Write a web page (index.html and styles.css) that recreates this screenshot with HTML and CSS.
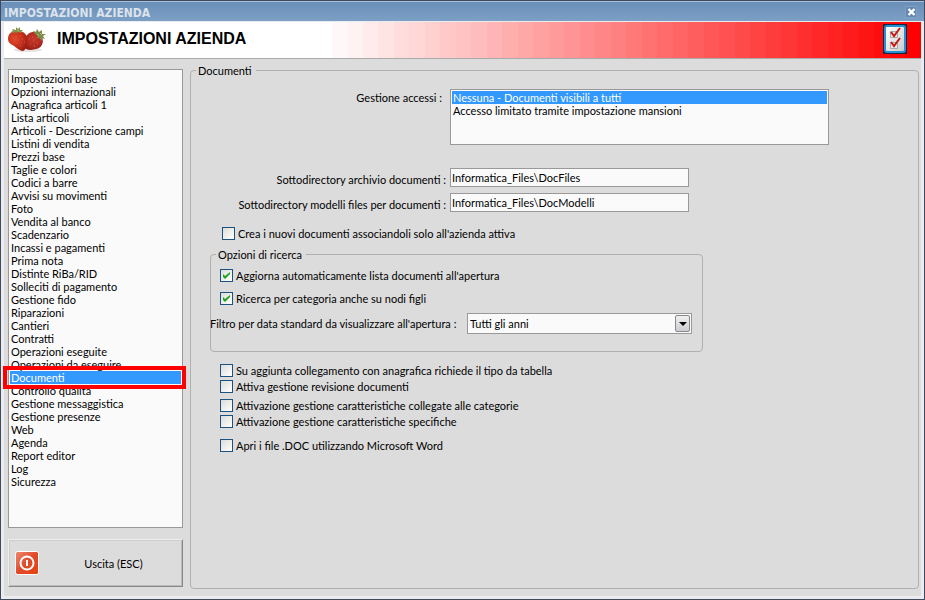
FILE: index.html
```html
<!DOCTYPE html>
<html lang="it">

<head>
<meta charset="UTF-8">
<meta name="viewport" content="width=device-width, initial-scale=1.0">
<title>Impostazioni azienda</title>
<link rel="stylesheet" href="styles.css">
</head>

<body>

<div class="window">

<div class="title-bar">
<span>IMPOSTAZIONI AZIENDA</span>
<button class="close" type="button" aria-label="Chiudi">
<svg width="9" height="8" viewBox="0 0 9 8"><path d="M1.5 1L7.500 7M7.500 1L1.500 7" stroke="#fff" stroke-width="2.400"/></svg>
</button>
</div>

<div class="client">

<header class="banner">
<div class="title">
<svg class="logo" width="40" height="28" viewBox="0 0 40 28">
<defs>
<radialGradient id="berry1" cx="0.35" cy="0.4" r="0.7"><stop stop-color="#e04a2c"/><stop offset="0.6" stop-color="#c42f1c"/><stop offset="1" stop-color="#9c1f14"/></radialGradient>
<radialGradient id="berry2" cx="0.5" cy="0.4" r="0.7"><stop stop-color="#c9382a"/><stop offset="0.6" stop-color="#b02a20"/><stop offset="1" stop-color="#861a14"/></radialGradient>
</defs>
<ellipse cx="20" cy="24" rx="14" ry="2" fill="#e9e2de"/>
<path d="M17 12C20 5 29 4 32 8C36 12 36 19 31 22C27 24 19 25 17 22Z" fill="url(#berry2)"/>
<path d="M0 13C0 7 5 4 10 5C16 5 20 9 19 15C19 20 18 24 15 25C12 25 9 22 6 20C3 18 0 17 0 13Z" fill="url(#berry1)"/>
<path d="M3 6L5 5L4 3L8 4L8 1L10 3L12 1L12 4L15 4L13 6L14 7L10 6L8 7L7 6L5 7Z" fill="#87914c"/>
<path d="M25 5L28 6L29 3L31 6L34 4L34 8L38 8L35 10L37 13L34 12L34 15L31 12L28 12L30 10L27 8Z" fill="#7d8b48"/>
<path d="M32 7l2 2M29 8l2 2M9 4l2 1" stroke="#b5b97c"/>
<path d="M4 11h1M8 10h1M12 10h1M6 14h1M10 14h1M14 13h1M9 17h1M13 17h1M16 16h1M12 20h1M21 13h1M24 11h1M25 15h1M22 18h1M29 17h1M26 20h1" stroke="#d8583a"/>
</svg>
<h1>IMPOSTAZIONI AZIENDA</h1>
</div>
<div class="bands" id="bands">
<svg class="checklist" width="24" height="30" viewBox="0 0 24 30">
<defs><linearGradient id="paper" x2="1" y2="1"><stop stop-color="#fff"/><stop offset="1" stop-color="#ccc"/></linearGradient></defs>
<rect width="24" height="30" rx="1" fill="#16283c"/>
<rect x="1" y="1" width="22" height="28" rx="3" fill="#2590d6"/>
<rect x="3" y="3" width="18" height="24" rx="1" fill="url(#paper)"/>
<path d="M7.500 7.500h7v6h-7zM7.500 18.500h7v6h-7z" fill="#e8e8e8" stroke="#aaa"/>
<path d="M8 8L11 12L17 4M8 18L11 22L17 14" fill="none" stroke="#c71912" stroke-width="2"/>
</svg>
</div>
</header>

<main class="content">

<div class="sidebar">
<nav>
<ul class="sections">
<li><a href="#">Impostazioni base</a></li>
<li><a href="#">Opzioni internazionali</a></li>
<li><a href="#">Anagrafica articoli 1</a></li>
<li><a href="#">Lista articoli</a></li>
<li><a href="#">Articoli - Descrizione campi</a></li>
<li><a href="#">Listini di vendita</a></li>
<li><a href="#">Prezzi base</a></li>
<li><a href="#">Taglie e colori</a></li>
<li><a href="#">Codici a barre</a></li>
<li><a href="#">Avvisi su movimenti</a></li>
<li><a href="#">Foto</a></li>
<li><a href="#">Vendita al banco</a></li>
<li><a href="#">Scadenzario</a></li>
<li><a href="#">Incassi e pagamenti</a></li>
<li><a href="#">Prima nota</a></li>
<li><a href="#">Distinte RiBa/RID</a></li>
<li><a href="#">Solleciti di pagamento</a></li>
<li><a href="#">Gestione fido</a></li>
<li><a href="#">Riparazioni</a></li>
<li><a href="#">Cantieri</a></li>
<li><a href="#">Contratti</a></li>
<li><a href="#">Operazioni eseguite</a></li>
<li><a href="#">Operazioni da eseguire</a></li>
<li class="current"><a href="#" aria-current="page">Documenti</a></li>
<li><a href="#">Controllo qualità</a></li>
<li><a href="#">Gestione messaggistica</a></li>
<li><a href="#">Gestione presenze</a></li>
<li><a href="#">Web</a></li>
<li><a href="#">Agenda</a></li>
<li><a href="#">Report editor</a></li>
<li><a href="#">Log</a></li>
<li><a href="#">Sicurezza</a></li>
</ul>
</nav>
<button class="exit" type="button">
<svg width="24" height="24" viewBox="0 0 24 24">
<defs><linearGradient id="power" x2="1" y2="1"><stop stop-color="#f08a72"/><stop offset="0.500" stop-color="#df4a2c"/><stop offset="1" stop-color="#e8430c"/></linearGradient></defs>
<rect x="0.500" y="0.500" width="23" height="23" rx="2" fill="url(#power)" stroke="#fff"/>
<circle cx="12" cy="12" r="6.500" fill="none" stroke="#fff" stroke-width="2"/>
<path d="M12 9v6" stroke="#fff" stroke-width="2"/>
</svg>
<span>Uscita (ESC)</span>
</button>
</div>

<fieldset class="panel">
<legend>Documenti</legend>

<div class="fields">
<label class="access-label" for="access">Gestione accessi :</label>
<select id="access" class="access" size="4">
<option class="chosen">Nessuna - Documenti visibili a tutti</option>
<option>Accesso limitato tramite impostazione mansioni</option>
</select>
<label for="archive">Sottodirectory archivio documenti :</label>
<input id="archive" type="text" value="Informatica_Files\DocFiles">
<label for="models">Sottodirectory modelli files per documenti :</label>
<input id="models" type="text" value="Informatica_Files\DocModelli">
</div>

<label class="check company"><input type="checkbox">Crea i nuovi documenti associandoli solo all'azienda attiva</label>

<fieldset class="search">
<legend>Opzioni di ricerca</legend>
<label class="check"><input type="checkbox" checked>Aggiorna automaticamente lista documenti all'apertura</label>
<label class="check"><input type="checkbox" checked>Ricerca per categoria anche su nodi figli</label>
<div class="filter">
<label for="years">Filtro per data standard da visualizzare all'apertura :</label>
<div class="combo">
<select id="years"><option>Tutti gli anni</option></select>
<span class="arrow"><svg width="8" height="4" viewBox="0 0 8 4"><path d="M0 0h8L4 4z"/></svg></span>
</div>
</div>
</fieldset>

<div class="checks">
<label class="check"><input type="checkbox">Su aggiunta collegamento con anagrafica richiede il tipo da tabella</label>
<label class="check"><input type="checkbox">Attiva gestione revisione documenti</label>
</div>
<div class="checks">
<label class="check"><input type="checkbox">Attivazione gestione caratteristiche collegate alle categorie</label>
<label class="check"><input type="checkbox">Attivazione gestione caratteristiche specifiche</label>
</div>
<div class="checks last">
<label class="check"><input type="checkbox">Apri i file .DOC utilizzando Microsoft Word</label>
</div>
</fieldset>

</main>
</div>
</div>

<script>
// white to red in even steps
const bands = document.getElementById('bands');
const steps = 39;
let stops = [];
for (let i = 0; i < steps; i++) {
const c = Math.round(255 - 255 * i / (steps - 1));
stops.push(`rgb(255, ${c}, ${c}) ${i / steps * 100}% ${(i + 1) / steps * 100}%`);
}
bands.style.backgroundImage = `linear-gradient(90deg, ${stops.join(', ')})`;
</script>

</body>

</html>
```
FILE: styles.css
```css
* {
box-sizing: border-box;
}

body {
margin: 0;
font-family: Lato, 'Liberation Sans', sans-serif;
font-size: 11px;
line-height: 13px;
color: #000;
}

button, input, select {
font: inherit;
color: inherit;
margin: 0;
}

.window {
display: flex;
flex-direction: column;
min-height: 100vh;
border: 1px solid #3f4a5c;
background: #ececf0;
}

.title-bar {
display: flex;
align-items: center;
justify-content: space-between;
height: 20px;
padding: 3px 7px 0 3px;
border-top: 1px solid #a9c0dc;
background: linear-gradient(#6a8fb8, #7c9fc5);
color: #dce3ec;
font-family: 'DejaVu Sans Condensed', 'DejaVu Sans', sans-serif;
font-stretch: condensed;
font-size: 12px;
font-weight: bold;
}

.close {
display: flex;
align-items: center;
justify-content: center;
width: 12px;
height: 12px;
margin-bottom: 2px;
padding: 0;
border: 1px solid #7fa0c4;
background: #6688ae;
}

.client {
display: flex;
flex-direction: column;
flex: 1;
margin: 1px 3px 3px;
background: #dcdcdc;
}

.banner {
display: flex;
height: 37px;
border-bottom: 1px solid #aaa;
background: #fff;
}

.title {
display: flex;
align-items: center;
width: 34%;
padding-left: 4px;
}

.banner h1 {
margin: 0 0 3px 9px;
font: bold 16px/20px 'Liberation Sans', Arial, sans-serif;
white-space: nowrap;
}

.bands {
display: flex;
align-items: center;
justify-content: flex-end;
flex: 1;
padding: 0 14px 3px 0;
}

.content {
display: flex;
flex: 1;
gap: 7px;
padding: 5px 2px 7px 4px;
}

.sidebar {
display: flex;
flex-direction: column;
gap: 11px;
width: 175px;
padding: 5px 0 2px;
}

.sidebar nav {
flex: 1;
border: 1px solid #999;
background: #fafafa;
}

.sections {
margin: 0;
padding: 2px 1px;
list-style: none;
}

.sections a {
display: block;
height: 13px;
padding: 0 1px;
color: #000;
text-decoration: none;
}

.sections .current {
position: relative;
}

.sections .current a {
background: #39f;
color: #fff;
}

/* red frame over the neighbouring rows */
.current::after {
content: '';
position: absolute;
inset: -5px -5px -5px -7px;
border: 4px solid #f00;
}

.exit {
display: flex;
align-items: center;
height: 48px;
padding: 0 6px;
border: 1px solid;
border-color: #eee #888 #888 #eee;
box-shadow: inset 1px 1px #cdcdd0, inset -1px -1px #bbb;
background: #dcdcdc;
}

.exit span {
flex: 1;
padding-left: 12px;
}

fieldset {
min-width: 0;
margin: 0;
border: 1px solid #b0b0b0;
border-radius: 4px;
}

legend {
padding: 0 4px 0 2px;
}

.panel {
flex: 1;
padding: 0 19px;
}

.panel > legend {
margin-left: -14px;
}

.fields {
display: grid;
grid-template-columns: 236px minmax(0, 379px);
column-gap: 4px;
row-gap: 6px;
padding-top: 12px;
}

.fields label {
align-self: center;
padding-top: 3px;
text-align: right;
}

.fields .access-label {
align-self: start;
padding: 2px 4px 0 0;
}

input[type="text"] {
width: 239px;
height: 19px;
padding: 0 1px;
border: 1px solid #999;
border-radius: 0;
background: #fafafa;
}

.access {
height: 56px;
margin-bottom: 17px;
padding: 1px;
border: 1px solid #999;
border-radius: 0;
background: #fafafa;
overflow: hidden;
}

.access option {
min-height: 13px;
padding: 0 1px;
}

.access .chosen {
background: #39f;
color: #fff;
}

.check {
display: flex;
align-items: center;
gap: 3px;
}

.check input {
appearance: none;
width: 13px;
height: 13px;
border: 1px solid #1c5180;
background: linear-gradient(135deg, #dcdcd7, #fff);
}

.check input:checked {
background: url("data:image/svg+xml,%3Csvg xmlns='http://www.w3.org/2000/svg' viewBox='0 0 11 11'%3E%3Cpath d='M2 4v3l2 2l5-5V2L4 6z' fill='%2321a121'/%3E%3C/svg%3E"), linear-gradient(135deg, #dcdcd7, #fff);
}

.company {
margin: 15px 0 8px 12px;
}

.search {
max-width: 493px;
margin-bottom: 12px;
padding: 8px 9px 17px;
}

.search legend {
margin-left: -4px;
}

.search .check {
margin-bottom: 10px;
}

.filter {
display: flex;
align-items: center;
justify-content: space-between;
margin: -2px 1px 0 -10px;
}

.filter label {
white-space: nowrap;
}

.combo {
position: relative;
width: 225px;
}

.combo select {
display: block;
appearance: none;
width: 100%;
height: 21px;
padding: 0 2px;
border: 1px solid #999;
border-radius: 0;
background: #fafafa;
}

.arrow {
position: absolute;
top: 2px;
right: 2px;
display: flex;
align-items: center;
justify-content: center;
width: 15px;
height: 17px;
border: 1px solid #888;
border-radius: 2px;
background: linear-gradient(#f0f0f2, #ccccd2);
pointer-events: none;
}

.checks {
display: flex;
flex-direction: column;
gap: 3px;
margin: 0 0 6px 10px;
}

.checks.last {
margin-top: 11px;
}
```
